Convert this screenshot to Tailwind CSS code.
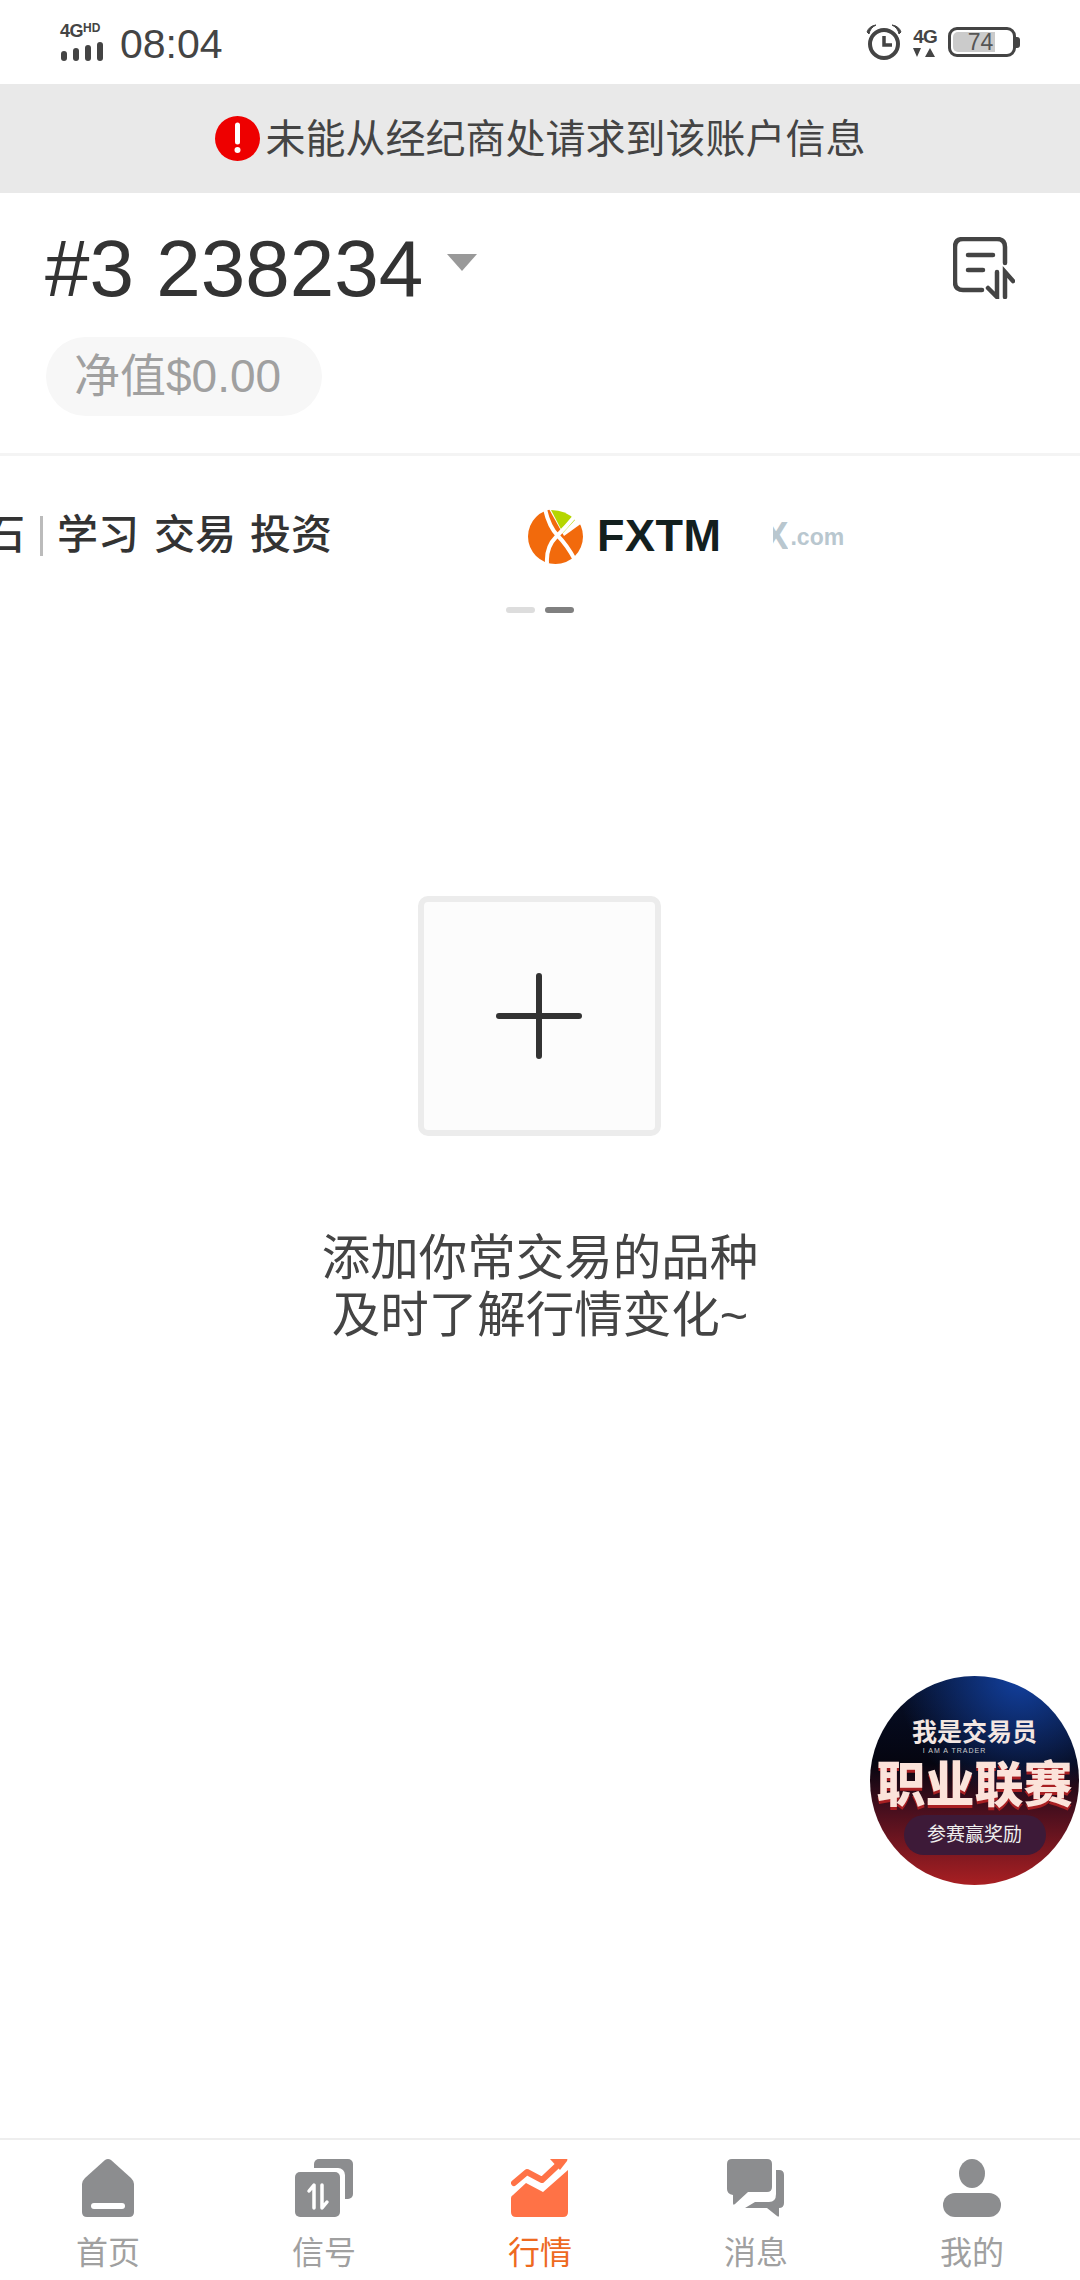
<!DOCTYPE html>
<html lang="zh-CN">
  <head>
    <meta charset="UTF-8" />
    <meta name="viewport" content="width=device-width, initial-scale=1.0" />
    <title>行情</title>
    <script src="https://cdn.jsdelivr.net/npm/@tailwindcss/browser@4"></script>
  </head>
  <body class="bg-white">
    <div class="relative flex flex-col w-[1080px] h-[2280px] overflow-hidden bg-white text-[#444] font-['Liberation_Sans','Noto_Sans_CJK_SC',sans-serif]">
      <!-- status bar -->
      <div class="flex items-center justify-between h-[84px] pl-[60px] pr-[60px] shrink-0">
        <div class="flex items-center gap-[15px]">
          <div class="flex flex-col w-[45px]">
            <div class="flex items-start h-[16px] font-bold leading-[16px] text-[#444]">
              <span class="text-[18px] tracking-[-0.5px]">4G</span>
              <span class="text-[12px] leading-[11px]">HD</span>
            </div>
            <div class="flex gap-[6px] mt-[3px] ml-[1px] items-end h-[19px]">
              <span class="w-[6px] h-[10px] rounded-[3px] bg-[#444]"></span>
              <span class="w-[6px] h-[13px] rounded-[3px] bg-[#444]"></span>
              <span class="w-[6px] h-[16px] rounded-[3px] bg-[#444]"></span>
              <span class="w-[6px] h-[19px] rounded-[3px] bg-[#444]"></span>
            </div>
          </div>
          <span class="text-[41px] leading-[40px] mt-[3px]">08:04</span>
        </div>
        <div class="flex items-center">
          <svg class="w-[36px] h-[36px]" viewBox="0 0 36 36">
            <circle cx="18" cy="20" r="14" fill="none" stroke="#444" stroke-width="4" />
            <path d="M18 12v9h8" fill="none" stroke="#444" stroke-width="3.5" />
            <path d="M1 8q2-6 9-7q-6 3-7 9zM35 8q-2-6-9-7q6 3 7 9z" fill="#444" stroke="#444" />
          </svg>
          <div class="flex flex-col items-center w-[26px] ml-[10px]">
            <span class="text-[19px] leading-[17px] font-bold tracking-[-1px]">4G</span>
            <svg class="w-[24px] h-[9px] mt-[3px]" viewBox="0 0 24 9">
              <path d="M4 9L0 0h8zM17 0l-5 9h10z" fill="#444" />
            </svg>
          </div>
          <div class="flex items-center ml-[10px]">
            <div class="relative w-[68px] h-[30px] rounded-[9px] border-[3px] border-[#444] p-[2px]">
              <div class="w-[42px] h-full rounded-l-[5px] bg-[#cbcbcb]"></div>
              <span class="absolute inset-0 pr-[3px] text-center text-[23px] leading-[24px] text-[#555]">74</span>
            </div>
            <span class="w-[4px] h-[11px] rounded-r-[3px] bg-[#444]"></span>
          </div>
        </div>
      </div>

      <!-- error banner -->
      <div class="flex items-center justify-center gap-[6px] h-[109px] shrink-0 bg-[#e9e9e9]">
        <svg class="w-[45px] h-[45px]" viewBox="0 0 45 45">
          <circle cx="22.5" cy="22.5" r="22.5" fill="#ee0000" />
          <path d="M22.5 9v17" stroke="#fff" stroke-width="5" stroke-linecap="round" />
          <circle cx="22.5" cy="34" r="3" fill="#fff" />
        </svg>
        <span class="text-[40px] leading-[50px] text-[#444]">未能从经纪商处请求到该账户信息</span>
      </div>

      <!-- account -->
      <div class="h-[263px] shrink-0 pt-[36px] border-b-[3px] border-[#f4f4f4]">
        <div class="flex items-start justify-between pl-[45px] pr-[65px] h-[80px]">
          <div class="flex items-center">
            <span class="text-[80px] leading-[80px] text-[#333]">#3 238234</span>
            <span class="ml-[24px] mb-[14px] w-0 h-0 border-x-[15px] border-x-transparent border-t-[17px] border-t-[#999]"></span>
          </div>
          <svg class="w-[62px] h-[62px] mt-[8px]" viewBox="0 0 62 62" fill="none" stroke="#444" stroke-width="4.5" stroke-linecap="round">
            <path d="M52 26V10q0-8-8-8H10q-8 0-8 8v35q0 8 8 8h19" />
            <path d="M15 18h25M15 33h15" />
            <path d="M44 35v25l-9-9M52 60V35l8 9" />
          </svg>
        </div>
        <div class="flex items-center w-[276px] h-[79px] ml-[46px] mt-[28px] pl-[28px] rounded-[40px] bg-[#f7f7f7] text-[46px] text-[#a0a0a0]">净值$0.00</div>
      </div>

      <!-- promo strip -->
      <div class="flex items-center h-[100px] mt-[30px] shrink-0 ml-[-16px]">
        <span class="w-[41px] text-[41px] font-medium text-[#333]">石</span>
        <span class="w-[3px] h-[40px] ml-[15px] bg-[#bbb]"></span>
        <span class="ml-[14px] text-[41px] font-medium text-[#333]">学习</span>
        <span class="ml-[15px] text-[41px] font-medium text-[#333]">交易</span>
        <span class="ml-[14px] text-[41px] font-medium text-[#333]">投资</span>
        <svg class="w-[55px] h-[55px] ml-[196px]" viewBox="0 0 55 55">
          <circle cx="27.5" cy="27.5" r="27.5" fill="#f26a0c" />
          <path d="M21 0L54 0V14L36 27z" fill="#fff" />
          <path d="M23 1q15 0 24 10L35 24z" fill="#b5d600" />
          <path d="M17 0q4 18 13 27t17 24M47 7Q38 18 28 28T19 54" fill="none" stroke="#fff" stroke-width="4" />
        </svg>
        <span class="ml-[14px] text-[45px] leading-[50px] font-bold tracking-[0.5px] text-[#13201f]">FXTM</span>
        <div class="flex items-end w-[72px] ml-[52px] text-[#b9c7cf] font-bold">
          <div class="flex justify-end w-[15px] overflow-hidden text-[38px] leading-[38px]"><span>X</span></div>
          <span class="ml-[2px] mb-[5px] text-[23px] leading-[26px]">.com</span>
        </div>
      </div>
      <div class="flex justify-center gap-[10px] mt-[21px] shrink-0">
        <span class="w-[29px] h-[6px] rounded-[3px] bg-[#ddd]"></span>
        <span class="w-[29px] h-[6px] rounded-[3px] bg-[#808080]"></span>
      </div>

      <!-- empty state -->
      <div class="flex flex-col items-center mt-[283px] shrink-0">
        <div class="flex items-center justify-center w-[243px] h-[240px] mr-[2px] rounded-[10px] border-[6px] border-[#ececec] bg-[#fcfcfc]">
          <svg class="w-[86px] h-[86px]" viewBox="0 0 86 86">
            <path d="M43 3v80M3 43h80" stroke="#333" stroke-width="6" stroke-linecap="round" />
          </svg>
        </div>
        <p class="mt-[94px] text-[48.5px] leading-[57px] text-center text-[#444]">添加你常交易的品种<br />及时了解行情变化~</p>
      </div>

      <!-- floating badge -->
      <div class="absolute left-[870px] top-[1676px] flex flex-col items-center w-[209px] h-[209px] rounded-full overflow-hidden bg-[radial-gradient(circle_at_72%_0%,#12409f_0%,transparent_48%),linear-gradient(180deg,#06102a_0%,#050510_42%,#4a0f1e_65%,#a81f22_100%)]">
        <span class="mt-[37px] text-[25px] leading-[34px] font-bold whitespace-nowrap text-[#f3e6e2] font-['Noto_Sans_CJK_SC',sans-serif]">我是交易员</span>
        <span class="text-[7px] leading-[8px] tracking-[1px] text-[#ccc] mr-[40px]">I AM A TRADER</span>
        <span class="mt-[-2px] text-[49px] leading-[56px] font-black whitespace-nowrap text-[#fbe3da] [text-shadow:0_3px_0_#a81f22] font-['Noto_Sans_CJK_SC',sans-serif]">职业联赛</span>
        <span class="flex items-center justify-center mt-[6px] w-[142px] h-[40px] rounded-[20px] bg-[#3d1a38] text-[19px] text-[#eee]">参赛赢奖励</span>
      </div>

      <!-- bottom nav -->
      <nav class="grid grid-cols-5 mt-auto h-[142px] pt-[19px] border-t-2 border-[#eee] shrink-0 text-[32px] leading-[32px] text-[#a0a0a0]">
        <div class="flex flex-col items-center">
          <svg class="w-[52px] h-[58px]" viewBox="0 0 52 58">
            <path d="M23 1q3-2 6 0l20 18q3 3 3 6v28q0 5-5 5H5q-5 0-5-5V25q0-3 3-6z" fill="#8c8d8f" />
            <rect x="9" y="44" width="34" height="6" rx="3" fill="#fff" />
          </svg>
          <span class="mt-[20px]">首页</span>
        </div>
        <div class="flex flex-col items-center">
          <svg class="w-[58px] h-[58px]" viewBox="0 0 58 58">
            <rect x="19" y="0" width="39" height="40" rx="5" fill="#8c8d8f" />
            <rect x="-4" y="9" width="54" height="53" rx="7" fill="#fff" />
            <rect x="0" y="13" width="45" height="45" rx="5" fill="#8c8d8f" />
            <path d="M14 32l5-6v23M27 26v23l5-6" fill="none" stroke="#fff" stroke-width="3.5" stroke-linejoin="round" stroke-linecap="round" />
          </svg>
          <span class="mt-[20px]">信号</span>
        </div>
        <div class="flex flex-col items-center text-[#ee6a1f]">
          <svg class="w-[58px] h-[58px]" viewBox="0 0 58 58">
            <path d="M0 39q0-2 2-3l13-12l17 9L57 11v42q0 5-5 5H5q-5 0-5-5z" fill="#ff7246" />
            <path d="M3 24L16 13l15 8L47 6" fill="none" stroke="#ff7246" stroke-width="6" stroke-linecap="round" stroke-linejoin="round" />
            <path d="M39 0h17q1 0 0 2L49 11z" fill="#ff7246" />
          </svg>
          <span class="mt-[20px]">行情</span>
        </div>
        <div class="flex flex-col items-center">
          <svg class="w-[58px] h-[58px]" viewBox="0 0 58 58">
            <path d="M5 0h35q5 0 5 5v23q0 5-5 5H21L8 45q-2 2-2-1V36Q0 35 0 30V5q0-5 5-5z" fill="#8c8d8f" />
            <path d="M49 11h3q5 0 5 5v28q0 5-5 5v8q0 1-2 0L40 49H18l10-6h14q7 0 7-8z" fill="#8c8d8f" />
          </svg>
          <span class="mt-[20px]">消息</span>
        </div>
        <div class="flex flex-col items-center">
          <svg class="w-[58px] h-[58px]" viewBox="0 0 58 58">
            <ellipse cx="29" cy="14.5" rx="13" ry="14.5" fill="#8c8d8f" />
            <rect x="0" y="34" width="58" height="24" rx="12" fill="#8c8d8f" />
          </svg>
          <span class="mt-[20px]">我的</span>
        </div>
      </nav>
    </div>
  </body>
</html>
